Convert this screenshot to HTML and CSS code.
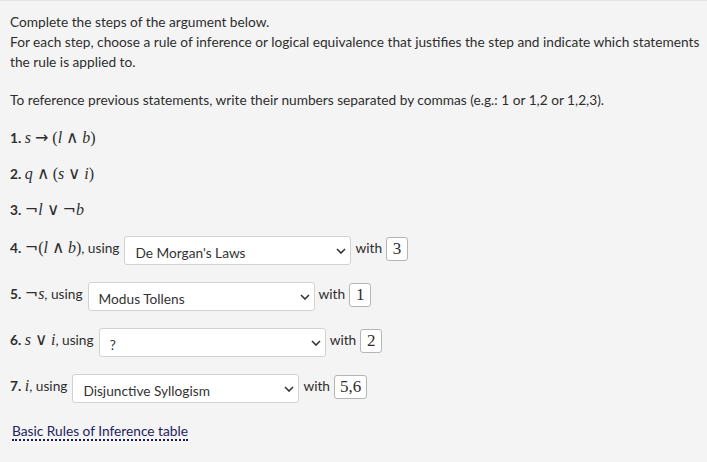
FILE: index.html
```html
<!DOCTYPE html>
<html lang="en">
<head>
    <meta charset="UTF-8">
    <meta name="viewport" content="width=device-width, initial-scale=1.0">
    <title>Rules of Inference</title>
    <link rel="stylesheet" href="styles.css">
</head>

<body>
    <div class="question">
        <p class="intro">
            Complete the steps of the argument below.<br>
            <span class="nowrap">For each step, choose a rule of inference or logical equivalence that justifies the step and indicate which statements</span><br>
            the rule is applied to.
        </p>
        <p class="intro">To reference previous statements, write their numbers separated by commas (e.g.: 1 or 1,2 or 1,2,3).</p>

        <div class="statement"><b>1.</b> <span class="math"><i>s</i> <span class="op">→</span> (<i>l</i> <span class="op big">∧</span> <i>b</i>)</span></div>
        <div class="statement"><b>2.</b> <span class="math"><i>q</i> <span class="op big">∧</span> (<i>s</i> <span class="op big">∨</span> <i>i</i>)</span></div>
        <div class="statement"><b>3.</b> <span class="math"><span class="op">¬</span><i>l</i> <span class="op big">∨</span> <span class="op">¬</span><i>b</i></span></div>

        <div class="step">
            <span class="label"><b>4.</b> <span class="math"><span class="op">¬</span>(<i>l</i> <span class="op big">∧</span> <i>b</i>)</span>, using</span>
            <span class="select-wrap">
                <select class="rule">
                    <option>?</option>
                    <option selected>De Morgan's Laws</option>
                    <option>Modus Tollens</option>
                    <option>Disjunctive Syllogism</option>
                </select>
                <svg class="chevron" width="10" height="6" viewBox="0 0 10 6"><path d="M1 1 L5 5 L9 1" fill="none" stroke="#333" stroke-width="1.6"/></svg>
            </span>
            <span class="label">with</span>
            <span class="refs">3</span>
        </div>

        <div class="step">
            <span class="label"><b>5.</b> <span class="math"><span class="op">¬</span><i>s</i></span>, using</span>
            <span class="select-wrap">
                <select class="rule">
                    <option>?</option>
                    <option>De Morgan's Laws</option>
                    <option selected>Modus Tollens</option>
                    <option>Disjunctive Syllogism</option>
                </select>
                <svg class="chevron" width="10" height="6" viewBox="0 0 10 6"><path d="M1 1 L5 5 L9 1" fill="none" stroke="#333" stroke-width="1.6"/></svg>
            </span>
            <span class="label">with</span>
            <span class="refs">1</span>
        </div>

        <div class="step">
            <span class="label"><b>6.</b> <span class="math"><i>s</i> <span class="op big">∨</span> <i>i</i></span>, using</span>
            <span class="select-wrap">
                <select class="rule">
                    <option selected>?</option>
                    <option>De Morgan's Laws</option>
                    <option>Modus Tollens</option>
                    <option>Disjunctive Syllogism</option>
                </select>
                <svg class="chevron" width="10" height="6" viewBox="0 0 10 6"><path d="M1 1 L5 5 L9 1" fill="none" stroke="#333" stroke-width="1.6"/></svg>
            </span>
            <span class="label">with</span>
            <span class="refs">2</span>
        </div>

        <div class="step">
            <span class="label"><b>7.</b> <span class="math"><i>i</i></span>, using</span>
            <span class="select-wrap">
                <select class="rule">
                    <option>?</option>
                    <option>De Morgan's Laws</option>
                    <option>Modus Tollens</option>
                    <option selected>Disjunctive Syllogism</option>
                </select>
                <svg class="chevron" width="10" height="6" viewBox="0 0 10 6"><path d="M1 1 L5 5 L9 1" fill="none" stroke="#333" stroke-width="1.6"/></svg>
            </span>
            <span class="label">with</span>
            <span class="refs">5,6</span>
        </div>

        <a class="table-link" href="#">Basic Rules of Inference table</a>
    </div>
</body>
</html>
```

FILE: styles.css
```css
body {
    margin: 0;
    background-color: #f4f4f4;
    border-top: 1px solid #e4e4e4;
    color: #2e2e2e;
    font-family: Lato, "Noto Sans", sans-serif;
    font-size: 13.7px;
}

.question {
    padding: 11px 10px;
}

.intro {
    margin: 0 0 18px;
    line-height: 20px;
}

.nowrap {
    white-space: nowrap;
}

.statement {
    line-height: 20px;
    margin-bottom: 16px;
}

.statement:last-of-type {
    margin-bottom: 12px;
}

b {
    font-weight: 700;
}

.math {
    font-family: "Liberation Serif", "DejaVu Serif", serif;
    font-size: 16px;
}

.math i {
    font-style: italic;
}

.math .op {
    font-family: "DejaVu Sans", sans-serif;
    font-size: 16px;
    line-height: 0;
}

.math .big {
    font-size: 17px;
    font-weight: 300;
}

.step {
    display: flex;
    align-items: flex-start;
    gap: 4px;
    margin-bottom: 17px;
}

.label {
    line-height: 20px;
    padding-top: 2px;
}

.select-wrap {
    position: relative;
    margin-left: 1px;
}

.rule {
    appearance: none;
    width: 227px;
    height: 29px;
    padding: 3px 0 0 10px;
    border: 1px solid #d2d2d2;
    border-radius: 3px;
    background: #fff;
    color: #333;
    font-family: Lato, "Noto Sans", sans-serif;
    font-size: 13.7px;
}

.chevron {
    position: absolute;
    right: 5px;
    top: 12px;
}

.refs {
    margin-top: 1px;
    height: 22px;
    min-width: 10px;
    padding: 0 5px;
    border: 1px solid #b5b5b5;
    border-radius: 3px;
    background: #fff;
    font-family: "Liberation Serif", "DejaVu Serif", serif;
    font-size: 17px;
    line-height: 22px;
    text-align: center;
}

.table-link {
    display: inline-block;
    margin: 2px 0 0 2px;
    color: #23235e;
    text-decoration: none;
    border-bottom: 2px dotted #1c1c4a;
    line-height: 17px;
}
```
